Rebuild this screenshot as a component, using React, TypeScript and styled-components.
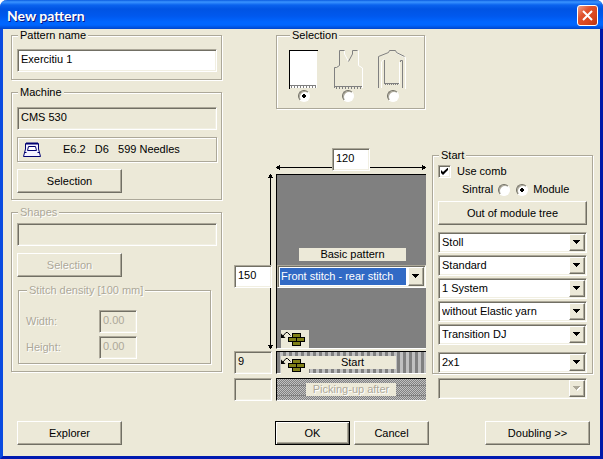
import React from "react";
import styled, { createGlobalStyle, css } from "styled-components";

const face = "#ece9d8";
const shade = "#aca899";
const dark = "#716f64";

const GlobalStyle = createGlobalStyle`
  *, *::before, *::after { box-sizing: border-box; }
  html, body { margin: 0; background: #fff; }
  body, button, input, select {
    font-family: "Liberation Sans", Arial, sans-serif;
    font-size: 11px;
    line-height: 13px;
    color: #000;
  }
`;

const sunken = css`
  border: 1px solid;
  border-color: ${shade} #fff #fff ${shade};
  box-shadow: inset 1px 1px ${dark}, inset -1px -1px #f1efe2;
`;

const etchedText = css`
  color: ${shade};
  text-shadow: 1px 1px #fff;
`;

const Window = styled.main`
  min-height: 100vh;
  display: flex;
  flex-direction: column;
  background: ${face};
  border: solid;
  border-width: 0 3px 3px;
  border-color: #0a3ad0 #0019a8 #0019b0 #0a4be0;
  border-radius: 7px 7px 0 0;
`;

const TitleBar = styled.header`
  height: 29px;
  margin: 0 -3px;
  padding: 0 5px 0 7px;
  display: flex;
  align-items: center;
  justify-content: space-between;
  border-radius: 7px 7px 0 0;
  background: linear-gradient(180deg, #0a5be0 0, #3a94ff 2px, #0a63ee 5px, #0054e3 9px, #0058ee 16px, #0066ff 22px, #0066ff 25px, #0046cc 29px);
`;

const Title = styled.h1`
  margin: 3px 0 0;
  font: bold 14px/18px Lato, "Open Sans", sans-serif;
  color: #fff;
  text-shadow: 1px 1px #0a1883;
`;

const CloseButton = styled.button`
  width: 21px;
  height: 21px;
  margin-top: 2px;
  padding: 0;
  display: grid;
  place-items: center;
  border: 1px solid #fff;
  border-radius: 3px;
  background: linear-gradient(135deg, #f0a088, #e0532e 35%, #d8451c 70%, #b83410);
`;

const Body = styled.div`
  display: grid;
  grid-template-columns: minmax(0, 211fr) 12px minmax(0, 192fr) 6px minmax(0, 161fr);
  padding: 0 7px 0 8px;
  & > :nth-child(2) { grid-column: 3; }
  & > :nth-child(3) { grid-column: 5; }
`;

const Column = styled.div<{ $gap?: number; $top?: number }>`
  display: flex;
  flex-direction: column;
  gap: ${(p) => p.$gap ?? 0}px;
  padding-top: ${(p) => p.$top ?? 0}px;
`;

const Group = styled.fieldset<{ $pad: string }>`
  min-width: 0;
  margin: 0;
  padding: ${(p) => p.$pad};
  border: 1px solid ${shade};
  box-shadow: 1px 1px #fff, inset 1px 1px #fff;
`;

const InnerGroup = styled(Group)`
  margin: 0 6px 0 1px;
`;

const Legend = styled.legend<{ $etched?: boolean }>`
  margin-left: 1px;
  padding: 0 2px;
  line-height: 13px;
  background: ${face};
  ${(p) => p.$etched && etchedText}
`;

const Stack = styled.div<{ $gap: number }>`
  display: flex;
  flex-direction: column;
  gap: ${(p) => p.$gap}px;
`;

const TextBox = styled.input<{ $width?: number }>`
  width: ${(p) => (p.$width ? `${p.$width}px` : "100%")};
  min-width: 0;
  height: 23px;
  margin: 0;
  padding: 0 3px 3px;
  border-radius: 0;
  outline: none;
  background: #fff;
  ${sunken}
  &:read-only, &:disabled { background: ${face}; }
  &:disabled { color: ${shade}; }
`;

const Info = styled.div`
  height: 25px;
  display: flex;
  align-items: center;
  gap: 22px;
  padding: 0 5px;
  border: 1px solid ${shade};
  box-shadow: 1px 1px #fff, inset 1px 1px #fff;
  white-space: pre;
`;

const PushButton = styled.button<{ $width?: number; $primary?: boolean }>`
  width: ${(p) => (p.$width ? `${p.$width}px` : "100%")};
  height: 24px;
  padding: 0;
  border-radius: 0;
  background: ${face};
  border: 1px solid;
  border-color: #fff ${dark} ${dark} #fff;
  box-shadow: inset -1px -1px ${shade};
  ${(p) =>
    p.$primary &&
    css`
      border-color: #000;
      box-shadow: inset 1px 1px #fff, inset -1px -1px ${dark}, inset -2px -2px ${shade};
    `}
  &:disabled { ${etchedText} }
`;

const DensityRow = styled.div`
  display: grid;
  grid-template-columns: 73px 38px;
  align-items: center;
`;

const FieldLabel = styled.label`
  ${etchedText}
`;

const ComboFrame = styled.div<{ $tall?: boolean }>`
  display: grid;
  grid-template-columns: minmax(0, 1fr) 16px;
  height: ${(p) => (p.$tall ? 23 : 21)}px;
  background: #fff;
  ${sunken}
  padding: 1px;
  &:has(select:disabled) { background: ${face}; }
`;

const ComboSelect = styled.select<{ $active?: boolean }>`
  grid-area: 1 / 1 / 2 / 3;
  appearance: none;
  width: 100%;
  min-width: 0;
  padding: 0 18px 0 1px;
  border: 1px solid transparent;
  border-radius: 0;
  outline: none;
  background: transparent;
  ${(p) =>
    p.$active &&
    css`
      color: #fff;
      background: linear-gradient(#316ac5, #316ac5) no-repeat 0 0 / calc(100% - 17px) 100%;
      option { color: #000; }
    `}
  &:disabled { opacity: 1; }
`;

const ComboArrow = styled.span`
  grid-area: 1 / 2 / 2 / 3;
  display: grid;
  place-items: center;
  pointer-events: none;
  background: ${face};
  border: 1px solid;
  border-color: #fff ${dark} ${dark} #fff;
  box-shadow: inset -1px -1px ${shade};
`;

const Radio = styled.input`
  appearance: none;
  width: 12px;
  height: 12px;
  margin: 0;
  border: 1px solid;
  border-color: ${dark} #fff #fff ${dark};
  border-radius: 50%;
  background: #fff;
  box-shadow: inset 1px 1px ${shade};
  &:checked { background: radial-gradient(circle at 5px 5px, #000 0 2px, #fff 2px); }
`;

const CheckRow = styled.label`
  display: flex;
  align-items: center;
  gap: 6px;
`;

const CheckFrame = styled.span`
  display: grid;
  width: 13px;
  height: 13px;
  & > * { grid-area: 1 / 1; }
  & > svg { place-self: center; pointer-events: none; }
`;

const CheckInput = styled.input`
  appearance: none;
  width: 13px;
  height: 13px;
  margin: 0;
  background: #fff;
  ${sunken}
  &:not(:checked) + svg { visibility: hidden; }
`;

const RadioRow = styled.div`
  display: flex;
  gap: 6px;
  padding-left: 24px;
  height: 13px;
  align-items: center;
`;

const RadioLabel = styled.label`
  display: flex;
  align-items: center;
  gap: 5px;
`;

const Garments = styled.div`
  display: flex;
  justify-content: space-between;
`;

const Garment = styled.label`
  display: flex;
  flex-direction: column;
  align-items: center;
  gap: 1px;
`;

const Indent = styled.div`
  padding: 0 1px 0 42px;
`;

const Plan = styled.div`
  display: grid;
  grid-template-columns: 42px minmax(0, 1fr);
  margin-top: 39px;
`;

const WidthCell = styled.div`
  grid-column: 2;
  height: 26px;
  display: grid;
  justify-items: center;
  & > * { grid-area: 1 / 1; }
  & > input { z-index: 1; }
`;

const HeightCell = styled.div`
  display: grid;
  & > * { grid-area: 1 / 1; }
  & > input { align-self: end; margin-bottom: 61px; z-index: 1; }
`;

const Measure = styled.div<{ $vertical?: boolean }>`
  display: flex;
  align-items: center;
  ${(p) =>
    p.$vertical
      ? css`
          flex-direction: column;
          width: 5px;
          justify-self: end;
          margin-right: 3px;
        `
      : css`
          width: 100%;
          height: 5px;
          margin-top: 17px;
        `}
`;

const MeasureLine = styled.span<{ $vertical?: boolean }>`
  flex: 1;
  background: #000;
  ${(p) => (p.$vertical ? "width: 1px;" : "height: 1px;")}
`;

const Fabric = styled.section`
  height: 175px;
  display: flex;
  flex-direction: column;
  padding-top: 73px;
  background: #808080;
  border: solid;
  border-width: 1px 0 1px 1px;
  border-color: #000 #fff #fff #000;
`;

const Tag = styled.label<{ $etched?: boolean }>`
  height: 13px;
  line-height: 13px;
  background: ${face};
  text-align: center;
  ${(p) => p.$etched && etchedText}
`;

const FabricTag = styled(Tag)`
  margin: 0 20px 4px 22px;
`;

const ModuleMark = styled.span`
  display: block;
  width: 28px;
  height: 18px;
  background: ${face};
`;

const FabricMark = styled(ModuleMark)`
  margin: auto 0 0 4px;
`;

const Strip = styled.section<{ $kind: "stripes" | "mesh" }>`
  height: 23px;
  display: grid;
  align-items: center;
  border: solid;
  border-width: 1px 0 1px 1px;
  border-color: #000 #fff #fff #000;
  ${(p) =>
    p.$kind === "stripes"
      ? css`
          padding: 4px 30px 0 4px;
          grid-template-columns: 28px minmax(0, 1fr);
          align-items: start;
          background: repeating-linear-gradient(90deg, #808080 0 3px, #c0c0c0 3px 6px);
        `
      : css`
          padding: 0 30px 0 29px;
          background:
            repeating-linear-gradient(180deg, transparent 0 6px, #808080 6px 7px, transparent 7px 10px),
            repeating-conic-gradient(#808080 0 25%, #c0c0c0 0 50%) 0 0 / 2px 2px;
        `}
`;

const Spacer = styled.div<{ $height: number }>`
  grid-column: 1 / -1;
  height: ${(p) => p.$height}px;
`;

const Inset = styled.div`
  padding: 0 6px;
`;

const Footer = styled.footer`
  display: grid;
  grid-template-columns: 258fr 210fr 106px;
  margin-top: auto;
  padding: 18px 9px 11px 14px;
`;

const Pair = styled.div`
  display: flex;
  gap: 4px;
`;

const DownArrow = ({ off }: { off?: boolean }) => (
  <svg width="8" height="5" viewBox="0 0 8 5" shapeRendering="crispEdges" aria-hidden="true">
    {off && <path d="M1 1h7v1h-1v1h-1v1h-1v1h-1v-1h-1v-1h-1v-1h-1z" fill="#fff" />}
    <path d="M0 0h7v1h-1v1h-1v1h-1v1h-1v-1h-1v-1h-1v-1h-1z" fill={off ? shade : "#000"} />
  </svg>
);

const Bricks = () => (
  <svg width="28" height="18" viewBox="0 0 28 18" aria-hidden="true">
    <g fill="#808018" stroke="#000">
      <rect x="11.5" y="3.5" width="8" height="4" />
      <rect x="7.5" y="7.5" width="8" height="4" />
      <rect x="15.5" y="7.5" width="8" height="4" />
      <rect x="11.5" y="11.5" width="8" height="4" />
    </g>
    <path d="M2 6L5 2.5H6.5L9.5 5.5" fill="none" stroke="#000" />
    <path d="M0 3.5V8H4.5z" fill="#000" />
  </svg>
);

const headShapes = {
  left: "M0 2h1v-1h2v-1h1v2h1v1h-1v2h-1v-1h-2v-1h-1z",
  right: "M5 2h-1v-1h-2v-1h-1v2h-1v1h1v2h1v-1h2v-1h1z",
  up: "M2 0v1h-1v2h-1v1h2v1h1v-1h2v-1h-1v-2h-1v-1z",
  down: "M2 5v-1h-1v-2h-1v-1h2v-1h1v1h2v1h-1v2h-1v1z",
};

const Head = ({ dir }: { dir: keyof typeof headShapes }) => (
  <svg width="5" height="5" viewBox="0 0 5 5" shapeRendering="crispEdges" aria-hidden="true">
    <path d={headShapes[dir]} />
  </svg>
);

const MachineIcon = () => (
  <svg width="18" height="16" viewBox="0 0 18 16" fill="none" stroke="#000070" aria-hidden="true">
    <path d="M2.5 1.5H15.5V7L17.5 14.5H.5L2.5 7z" fill="#f4f2ff" />
    <path d="M3 1.5H15" strokeWidth="2" />
    <path d="M4.5 8.5L5.5 4.5H12.5L13.5 8.5z" fill="#fff" />
    <path d="M1.5 10.5H3.5M14.5 10.5H16.5" />
  </svg>
);

const PanelIcon = () => (
  <svg width="29" height="39" viewBox="0 0 29 39" shapeRendering="crispEdges" aria-hidden="true">
    <path d="M1 1H28V38H1z" fill="#fff" />
    <path d="M0 0H29V1H1V39H0z" />
    <path d="M1 35.5H27" stroke="#808080" />
    <path d="M2 37H27" stroke="#808080" strokeWidth="2" strokeDasharray="1 2" />
  </svg>
);

const VestIcon = () => (
  <svg width="29" height="39" viewBox="0 0 29 39" fill="none" aria-hidden="true">
    <path d="M10.5 1V4L14.5 11.5M24.5 .5V15.5L28.5 18V38" stroke="#fff" />
    <path d="M.5 38V17.5H2.5L5.5 15.5V.5H10.5M14.5 11.5L18.5 4V.5H23.5" stroke="#808080" />
    <g shapeRendering="crispEdges">
      <path d="M0 36.5H28" stroke="#808080" />
      <path d="M2 38H28" stroke="#808080" strokeWidth="2" strokeDasharray="1 2" />
    </g>
  </svg>
);

const SweaterIcon = () => (
  <svg width="29" height="39" viewBox="0 0 29 39" fill="none" aria-hidden="true">
    <path d="M18 2.5L27.5 7.5V39M3.5 38V12L5.5 9.5M21.5 34V12" stroke="#fff" />
    <path d="M.5 38V6.5L10.5 2.5L11.5 .5H17.5L18.5 2.5L26.5 6.5" stroke="#808080" />
    <path d="M6.5 34V10M24.5 38V10.5H22.5V12" stroke="#808080" />
    <g shapeRendering="crispEdges">
      <path d="M6 33.5H21" stroke="#808080" />
      <path d="M7 34.5H21" stroke="#808080" strokeDasharray="1 1" />
    </g>
  </svg>
);

type ComboProps = { label?: string; id?: string; value: string; active?: boolean; disabled?: boolean; tall?: boolean };

const Combo = ({ label, id, value, active, disabled, tall }: ComboProps) => (
  <ComboFrame $tall={tall}>
    <ComboSelect id={id} aria-label={label} $active={active} disabled={disabled}>
      <option>{value}</option>
    </ComboSelect>
    <ComboArrow>
      <DownArrow off={disabled} />
    </ComboArrow>
  </ComboFrame>
);

const garments = [
  { name: "Panel", Icon: PanelIcon },
  { name: "Vest", Icon: VestIcon },
  { name: "Sweater", Icon: SweaterIcon },
];

const modules = [
  { label: "Manufacturer", value: "Stoll" },
  { label: "Type", value: "Standard" },
  { label: "Systems", value: "1 System" },
  { label: "Elastic yarn", value: "without Elastic yarn" },
  { label: "Transition", value: "Transition DJ" },
];

export default function App() {
  return (
    <>
      <GlobalStyle />
      <Window>
        <TitleBar>
          <Title>New pattern</Title>
          <CloseButton aria-label="Close">
            <svg width="13" height="13" viewBox="0 0 13 13" aria-hidden="true">
              <path d="M2 2L11 11M11 2L2 11" stroke="#fff" strokeWidth="2" />
            </svg>
          </CloseButton>
        </TitleBar>

        <Body>
          <Column $gap={6}>
            <Group $pad="7px 4px 7px 5px">
              <Legend>Pattern name</Legend>
              <TextBox aria-label="Pattern name" defaultValue="Exercitiu 1" />
            </Group>

            <Group $pad="8px 4px 6px 5px">
              <Legend>Machine</Legend>
              <Stack $gap={7}>
                <TextBox aria-label="Machine" readOnly value="CMS 530" />
                <Info>
                  <MachineIcon />
                  {"E6.2   D6   599 Needles"}
                </Info>
                <PushButton $width={105}>Selection</PushButton>
              </Stack>
            </Group>

            <Group $pad="4px 4px 7px 5px">
              <Legend $etched>Shapes</Legend>
              <Stack $gap={7}>
                <TextBox aria-label="Shapes" disabled />
                <PushButton $width={105} disabled>
                  Selection
                </PushButton>
                <InnerGroup $pad="13px 4px 4px 7px">
                  <Legend $etched>Stitch density [100 mm]</Legend>
                  <Stack $gap={3}>
                    <DensityRow>
                      <FieldLabel htmlFor="density-width">Width:</FieldLabel>
                      <TextBox id="density-width" disabled value="0.00" />
                    </DensityRow>
                    <DensityRow>
                      <FieldLabel htmlFor="density-height">Height:</FieldLabel>
                      <TextBox id="density-height" disabled value="0.00" />
                    </DensityRow>
                  </Stack>
                </InnerGroup>
              </Stack>
            </Group>
          </Column>

          <Column>
            <Indent>
              <Group $pad="8px 17px 6px 12px">
                <Legend>Selection</Legend>
                <Garments>
                  {garments.map(({ name, Icon }, i) => (
                    <Garment key={name}>
                      <Icon />
                      <Radio type="radio" name="garment" aria-label={name} defaultChecked={i === 0} />
                    </Garment>
                  ))}
                </Garments>
              </Group>
            </Indent>

            <Plan>
              <WidthCell>
                <Measure>
                  <Head dir="left" />
                  <MeasureLine />
                  <Head dir="right" />
                </Measure>
                <TextBox aria-label="Width" $width={38} defaultValue="120" />
              </WidthCell>

              <HeightCell>
                <TextBox aria-label="Height" $width={38} defaultValue="150" />
                <Measure $vertical>
                  <Head dir="up" />
                  <MeasureLine $vertical />
                  <Head dir="down" />
                </Measure>
              </HeightCell>
              <Fabric>
                <FabricTag htmlFor="basic-pattern">Basic pattern</FabricTag>
                <Combo id="basic-pattern" value="Front stitch - rear stitch" active tall />
                <FabricMark>
                  <Bricks />
                </FabricMark>
              </Fabric>

              <Spacer $height={2} />
              <TextBox id="start-rows" $width={38} readOnly value="9" />
              <Strip $kind="stripes">
                <ModuleMark>
                  <Bricks />
                </ModuleMark>
                <Tag htmlFor="start-rows">Start</Tag>
              </Strip>

              <Spacer $height={4} />
              <TextBox id="pickup-rows" $width={38} disabled />
              <Strip $kind="mesh">
                <Tag $etched htmlFor="pickup-rows">
                  Picking-up after
                </Tag>
              </Strip>
            </Plan>
          </Column>

          <Column $gap={4} $top={120}>
            <Group $pad="3px 5px 0 5px">
              <Legend>Start</Legend>
              <Stack $gap={7}>
                <Stack $gap={5}>
                  <CheckRow>
                    <CheckFrame>
                      <CheckInput type="checkbox" defaultChecked />
                      <svg width="7" height="7" viewBox="0 0 7 7" aria-hidden="true">
                        <path d="M0 2v3l2 2 5-5v-2.5l-5 4.5z" />
                      </svg>
                    </CheckFrame>
                    Use comb
                  </CheckRow>
                  <RadioRow>
                    <RadioLabel>
                      Sintral
                      <Radio type="radio" name="source" />
                    </RadioLabel>
                    <RadioLabel>
                      <Radio type="radio" name="source" defaultChecked />
                      Module
                    </RadioLabel>
                  </RadioRow>
                  <PushButton>Out of module tree</PushButton>
                </Stack>
                <Stack $gap={2}>
                  {modules.map((m) => (
                    <Combo key={m.label} {...m} />
                  ))}
                </Stack>
                <Combo label="Rib" value="2x1" />
              </Stack>
            </Group>
            <Inset>
              <Combo label="Picking-up after module" value="" disabled />
            </Inset>
          </Column>
        </Body>

        <Footer>
          <PushButton $width={105}>Explorer</PushButton>
          <Pair>
            <PushButton $width={75} $primary>
              OK
            </PushButton>
            <PushButton $width={75}>Cancel</PushButton>
          </Pair>
          <PushButton $width={105}>Doubling &gt;&gt;</PushButton>
        </Footer>
      </Window>
    </>
  );
}
